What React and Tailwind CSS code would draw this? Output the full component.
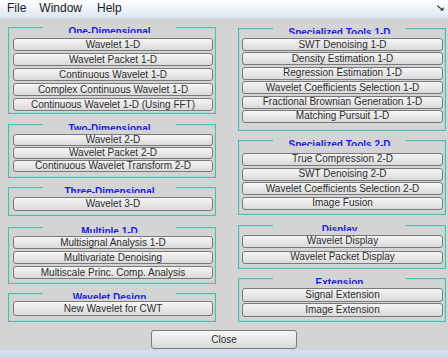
import React from 'react';

const Btn = ({ label, h = 'h-[13px]' }) => (
  <div
    className={`${h} flex items-center justify-center rounded-[3px] border border-[#7a7a7a] bg-linear-to-b from-[#f6f6f6] to-[#dadada] text-[10px] leading-none text-[#2e2e2e]`}
  >
    {label}
  </div>
);

const Panel = ({ title, className, gap, h, items }) => (
  <div className={`relative border border-[#55bcad] shadow-[inset_0_0_0_1px_#a8dcd4] ${className}`}>
    <div className="absolute -top-[1px] left-[34px] h-[6px] w-[133px] overflow-hidden bg-[#d4d4d4] text-center text-[10px] font-bold leading-[10px] text-[#1c1ce8]">
      {title}
    </div>
    <div className={`flex flex-col ${gap}`}>
      {items.map((it) => (
        <Btn key={it} label={it} h={h} />
      ))}
    </div>
  </div>
);

const App = () => {
  return (
    <div className="flex h-[357px] w-[448px] flex-col bg-[#d4d4d4] font-['Liberation_Sans',Arial,sans-serif]">
      {/* menu bar */}
      <div className="relative flex h-[18px] items-start bg-linear-to-b from-[#ffffff] to-[#dde6f1] pl-[7px] text-[12px] leading-[17px] text-[#1a1a1a]">
        <span>File</span>
        <span className="ml-[13px]">Window</span>
        <span className="ml-[15px]">Help</span>
        <svg className="absolute right-[4px] top-[5px]" width="7" height="6" viewBox="0 0 7 6">
          <path d="M0.5 0.8 L5 4.6" stroke="#2a2a2a" strokeWidth="1.2" />
          <path d="M6.5 5.5 L6.5 2.2 L3 5.5 Z" fill="#2a2a2a" />
        </svg>
      </div>

      <div className="flex flex-1 flex-col">
        <div className="flex pl-[8px] pt-[9px]">
          {/* left column */}
          <div className="flex w-[208px] flex-col">
            <Panel
              title="One-Dimensional"
              className="pb-[2px] pl-[4px] pr-[2px] pt-[10px]"
              gap="gap-[2px]"
              items={[
                'Wavelet 1-D',
                'Wavelet Packet 1-D',
                'Continuous Wavelet 1-D',
                'Complex Continuous Wavelet 1-D',
                'Continuous Wavelet 1-D (Using FFT)',
              ]}
            />
            <Panel
              title="Two-Dimensional"
              className="mt-[10px] pb-[5px] pl-[4px] pr-[2px] pt-[9px]"
              gap="gap-[1px]"
              h="h-[12px]"
              items={['Wavelet 2-D', 'Wavelet Packet 2-D', 'Continuous Wavelet Transform 2-D']}
            />
            <Panel
              title="Three-Dimensional"
              className="mt-[9px] pb-[4px] pl-[4px] pr-[2px] pt-[9px]"
              h="h-[14px]"
              items={['Wavelet 3-D']}
            />
            <Panel
              title="Multiple 1-D"
              className="mt-[11px] pb-[4px] pl-[4px] pr-[2px] pt-[8px]"
              gap="gap-[2px]"
              items={['Multisignal Analysis 1-D', 'Multivariate Denoising', 'Multiscale Princ. Comp. Analysis']}
            />
            <Panel
              title="Wavelet Design"
              className="mt-[9px] pb-[5px] pl-[4px] pr-[2px] pt-[7px]"
              h="h-[15px]"
              items={['New Wavelet for CWT']}
            />
          </div>

          {/* right column */}
          <div className="ml-[22px] mt-[1px] flex w-[208px] flex-col">
            <Panel
              title="Specialized Tools 1-D"
              className="pb-[7px] pl-[3px] pr-[2px] pt-[9px]"
              gap="gap-[1.4px]"
              items={[
                'SWT Denoising 1-D',
                'Density Estimation 1-D',
                'Regression Estimation 1-D',
                'Wavelet Coefficients Selection 1-D',
                'Fractional Brownian Generation 1-D',
                'Matching Pursuit 1-D',
              ]}
            />
            <Panel
              title="Specialized Tools 2-D"
              className="mt-[9px] pb-[4px] pl-[3px] pr-[2px] pt-[12px]"
              gap="gap-[1.67px]"
              items={[
                'True Compression 2-D',
                'SWT Denoising 2-D',
                'Wavelet Coefficients Selection 2-D',
                'Image Fusion',
              ]}
            />
            <Panel
              title="Display"
              className="mt-[10px] pb-[4px] pl-[3px] pr-[2px] pt-[9px]"
              gap="gap-[3px]"
              items={['Wavelet Display', 'Wavelet Packet Display']}
            />
            <Panel
              title="Extension"
              className="mt-[9px] pb-[4px] pl-[3px] pr-[2px] pt-[9px]"
              gap="gap-[1px]"
              h="h-[14px]"
              items={['Signal Extension', 'Image Extension']}
            />
          </div>
        </div>

        <div className="mt-[8px] flex justify-center">
          <div className="flex h-[19px] w-[146px] items-center justify-center rounded-[3px] border border-[#7a7a7a] bg-linear-to-b from-[#f6f6f6] to-[#dadada] text-[10px] leading-none text-[#2e2e2e]">
            Close
          </div>
        </div>
      </div>

      <div className="h-[7px] bg-linear-to-b from-[#d6e4f3] to-[#c9dbef]" />
    </div>
  );
};

export default App;
